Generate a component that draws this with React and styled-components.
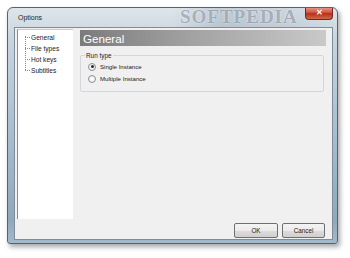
import React, { useState } from "react";
import styled, { createGlobalStyle } from "styled-components";

const GlobalStyle = createGlobalStyle`
  body {
    margin: 0;
    background: #ffffff;
    font-family: "Liberation Sans", Arial, sans-serif;
  }
`;

const Page = styled.div`
  padding: 7px 0 0 7px;
  width: 350px;
  height: 258px;
  box-sizing: border-box;
`;

const Window = styled.div`
  width: 331px;
  height: 237px;
  box-sizing: border-box;
  display: flex;
  flex-direction: column;
  padding: 0 4px 3px 6px;
  border: 1px solid #56646f;
  border-radius: 6px 6px 3px 3px;
  background: linear-gradient(180deg, #dfe5ea 0px, #c9d5df 30px, #a4b9cb 60%, #90a8bc 90%, #a3bacd 100%);
  box-shadow: 2px 3px 5px rgba(0, 0, 0, 0.35);
  position: relative;
  overflow: hidden;
`;

const TitleBar = styled.div`
  height: 19px;
  display: flex;
  align-items: flex-start;
  justify-content: space-between;
  position: relative;
  background: linear-gradient(90deg, transparent 0%, transparent 50%, rgba(110, 130, 150, 0.25) 65%, rgba(110, 130, 150, 0.15) 85%, transparent 100%);
  margin: 0 -4px 0 -6px;
  padding: 0 4px 0 6px;
`;

const Title = styled.span`
  font-size: 7px;
  color: #1e1e1e;
  margin: 6px 0 0 4px;
`;

const Watermark = styled.span`
  position: absolute;
  left: 172px;
  top: -2px;
  font-family: "Liberation Serif", serif;
  font-weight: bold;
  font-size: 19px;
  letter-spacing: 1px;
  color: rgba(55, 75, 100, 0.38);
  text-shadow: 0 0 2px rgba(255, 255, 255, 0.7);
`;

const CloseButton = styled.div`
  width: 26px;
  height: 12px;
  margin-top: -1px;
  border: 1px solid #6e2a22;
  border-top: none;
  border-radius: 0 0 4px 4px;
  background: linear-gradient(180deg, #e9a195 0%, #d4543f 45%, #b5301c 55%, #cf6a48 100%);
  display: flex;
  align-items: center;
  justify-content: center;
  color: #ffffff;
  font-size: 8px;
  font-weight: bold;
  line-height: 1;
  position: relative;
`;

const Client = styled.div`
  flex: 1;
  display: flex;
  flex-direction: column;
  background: #f0f0f0;
  border: 1px solid #7d8d9c;
  padding: 1px 6px 0 2px;
`;

const BodyRow = styled.div`
  display: flex;
  gap: 7px;
`;

const Tree = styled.ul`
  list-style: none;
  margin: 0;
  padding: 2px 0 0 0;
  width: 56px;
  height: 190px;
  box-sizing: border-box;
  background: #ffffff;
  border-left: 1px solid #8a8a8a;
  border-top: 1px solid #c8c8c8;
  position: relative;
`;

const TreeLine = styled.div`
  position: absolute;
  left: 7px;
  top: 6px;
  height: 34px;
  border-left: 1px dotted #8a8a8a;
`;

const TreeItem = styled.li`
  position: relative;
  height: 11px;
  font-size: 6.6px;
  line-height: 11px;
  color: #1a1a1a;
  padding-left: 13px;
  &::before {
    content: "";
    position: absolute;
    left: 7px;
    top: 5px;
    width: 5px;
    border-top: 1px dotted #8a8a8a;
  }
`;

const Panel = styled.div`
  flex: 1;
  display: flex;
  flex-direction: column;
  gap: 6px;
`;

const Header = styled.div`
  height: 16px;
  margin-top: 1px;
  padding-left: 3px;
  display: flex;
  align-items: center;
  background: linear-gradient(90deg, #7b7b7b 0%, #a2a2a2 45%, #c9c9c9 100%);
  color: #ffffff;
  font-size: 11.6px;
`;

const GroupBox = styled.fieldset`
  margin: 0 2px 0 0;
  padding: 3px 0 3px 7px;
  height: 40px;
  box-sizing: border-box;
  border: 1px solid #d3d6da;
  border-radius: 2px;
  display: flex;
  flex-direction: column;
  gap: 3px;
`;

const Legend = styled.legend`
  font-size: 6.4px;
  color: #1a1a1a;
  padding: 0 1px;
  margin-left: -3px;
`;

const RadioRow = styled.label`
  display: flex;
  align-items: center;
  gap: 4px;
  font-size: 6.1px;
  color: #1a1a1a;
  height: 9px;
`;

const RadioCircle = styled.span`
  width: 6px;
  height: 6px;
  border-radius: 50%;
  border: 1px solid #8e8f8f;
  background: radial-gradient(circle, #ffffff 0%, #e6e6e6 100%);
  display: flex;
  align-items: center;
  justify-content: center;
  &::after {
    content: "";
    width: 3px;
    height: 3px;
    border-radius: 50%;
    background: ${(p) => (p.$checked ? "#2b2b2b" : "transparent")};
  }
`;

const Footer = styled.div`
  display: flex;
  justify-content: flex-end;
  gap: 4px;
  margin-top: 4px;
  padding-right: 1px;
`;

const Button = styled.button`
  width: ${(p) => p.$w}px;
  height: 15px;
  padding: 0;
  border: 1px solid #707070;
  border-radius: 2px;
  background: linear-gradient(180deg, #f4f4f4 0%, #ebebeb 50%, #dddddd 51%, #cfcfcf 100%);
  font-family: "Liberation Sans", Arial, sans-serif;
  font-size: 6.3px;
  color: #1a1a1a;
`;

const sections = ["General", "File types", "Hot keys", "Subtitles"];

export default function App() {
  const [runType, setRunType] = useState("single");

  return (
    <Page>
      <GlobalStyle />
      <Window>
        <TitleBar>
          <Title>Options</Title>
          <Watermark>SOFTPEDIA</Watermark>
          <CloseButton>✕</CloseButton>
        </TitleBar>
        <Client>
          <BodyRow>
            <Tree>
              <TreeLine />
              {sections.map((s) => (
                <TreeItem key={s}>{s}</TreeItem>
              ))}
            </Tree>
            <Panel>
              <Header>General</Header>
              <GroupBox>
                <Legend>Run type</Legend>
                <RadioRow onClick={() => setRunType("single")}>
                  <RadioCircle $checked={runType === "single"} />
                  Single Instance
                </RadioRow>
                <RadioRow onClick={() => setRunType("multiple")}>
                  <RadioCircle $checked={runType === "multiple"} />
                  Multiple Instance
                </RadioRow>
              </GroupBox>
            </Panel>
          </BodyRow>
          <Footer>
            <Button $w={44}>OK</Button>
            <Button $w={43}>Cancel</Button>
          </Footer>
        </Client>
      </Window>
    </Page>
  );
}
